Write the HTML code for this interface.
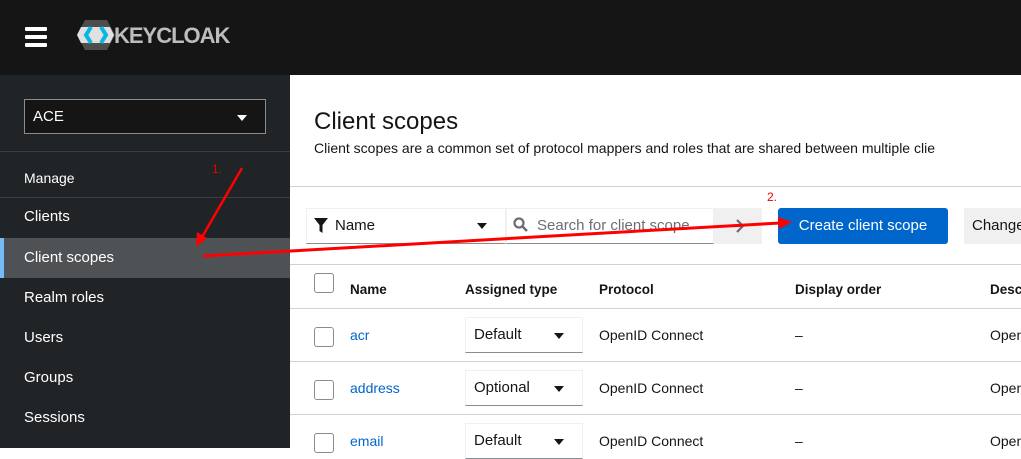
<!DOCTYPE html>
<html><head><style>
*{margin:0;padding:0;box-sizing:border-box}
body{width:1021px;height:448px;overflow:hidden;font-family:"Liberation Sans",sans-serif;background:#fff;position:relative;color:#151515}
.hdr{position:absolute;left:0;top:0;width:1021px;height:75px;background:#151515}
.side{position:absolute;left:0;top:75px;width:290px;height:373px;background:#212427}
.abs{position:absolute;white-space:nowrap}
.nav{position:absolute;left:0;width:290px;height:40px;color:#fff;font-size:15px;line-height:40px;padding-left:24px}
.hl{position:absolute;height:1px;background:#d2d2d2}
.th{position:absolute;font-size:13.5px;font-weight:bold;top:282px}
.td{position:absolute;font-size:14px}
.cb{position:absolute;left:314px;width:20px;height:20px;border:1px solid #8a8d90;border-radius:3px;background:#fff}
.sel{position:absolute;left:465px;width:118px;height:36px;border:1px solid #f0f0f0;border-bottom:1px solid #8a8d90;font-size:15px;padding:8px 0 0 8px}
.sel:after{content:"";position:absolute;right:18px;top:15px;border:5px solid transparent;border-top:6px solid #151515}
a{color:#06c}
</style></head><body>
<div class="hdr">
 <div class="abs" style="left:25px;top:27px;width:22px;height:4px;background:#fff;border-radius:1px"></div>
 <div class="abs" style="left:25px;top:35px;width:22px;height:4px;background:#fff;border-radius:1px"></div>
 <div class="abs" style="left:25px;top:43px;width:22px;height:4px;background:#fff;border-radius:1px"></div>
 <svg class="abs" style="left:76px;top:19px" width="40" height="32" viewBox="0 0 40 32"><polygon points="9,1 31,1 39,16 31,31 9,31 1,16" fill="#4d4d4d"/><polygon points="1,16 5,8 34,8 38,16 34,24 5,24" fill="#e0e0e0"/><path d="M15,8 L10,16 L15,24 M25,8 L30,16 L25,24" stroke="#00b8e3" stroke-width="4" fill="none"/></svg>
 <div class="abs" style="left:114px;top:23px;font-size:22px;font-weight:bold;color:#bdbdbd;letter-spacing:-1px">KEYCLOAK</div>
</div>
<div class="side">
 <div class="abs" style="left:24px;top:24px;width:242px;height:35px;border:1px solid #8a8d90;background:#151515;color:#fff;font-size:15px;padding:8px 0 0 8px">ACE</div>
 <div class="abs" style="left:237px;top:40px;border:5px solid transparent;border-top:6px solid #fff"></div>
 <div class="abs" style="left:0;top:76px;width:290px;height:1px;background:#3c3f42"></div>
 <div class="abs" style="left:0;top:122px;width:290px;height:1px;background:#3c3f42"></div>
</div>
<div class="nav" style="font-size:14px;top:158px">Manage</div>
<div class="nav" style="top:197px">Clients</div>
<div class="nav" style="top:238px;background:#4f5255;border-left:4px solid #73bcf7;padding-left:20px">Client scopes</div>
<div class="nav" style="top:278px">Realm roles</div>
<div class="nav" style="top:318px">Users</div>
<div class="nav" style="top:358px">Groups</div>
<div class="nav" style="top:398px">Sessions</div>

<div class="abs" style="left:314px;top:108px;font-size:24px">Client scopes</div>
<div class="abs" style="left:314px;top:140px;font-size:14px">Client scopes are a common set of protocol mappers and roles that are shared between multiple clie</div>
<div class="hl" style="left:290px;top:186px;width:731px"></div>
<div class="abs" style="left:306px;top:208px;width:200px;height:36px;border:1px solid #f0f0f0;border-bottom:1px solid #8a8d90;font-size:15px;padding:8px 0 0 28px">Name</div>
<svg class="abs" style="left:314px;top:218px" width="14" height="15" viewBox="0 0 14 15"><path d="M0,0H14L8.5,7V15L5.5,13V7Z" fill="#151515"/></svg>
<div class="abs" style="left:477px;top:223px;border:5px solid transparent;border-top:6px solid #151515"></div>
<div class="abs" style="left:506px;top:208px;width:208px;height:36px;border:1px solid #f0f0f0;border-bottom:1px solid #8a8d90;font-size:15px;padding:8px 0 0 30px;color:#6a6e73">Search for client scope</div>
<svg class="abs" style="left:513px;top:217px" width="15" height="15" viewBox="0 0 15 15"><circle cx="6" cy="6" r="4.5" stroke="#6a6e73" stroke-width="2.2" fill="none"/><path d="M9.5,9.5L14,14" stroke="#6a6e73" stroke-width="2.5"/></svg>
<div class="abs" style="left:714px;top:208px;width:48px;height:36px;background:#f0f0f0"></div>
<svg class="abs" style="left:729px;top:218px" width="16" height="16" viewBox="0 0 16 16"><path d="M1,8H14M8,2L14,8L8,14" stroke="#6a6e73" stroke-width="2.2" fill="none"/></svg>
<div class="abs" style="left:778px;top:208px;width:170px;height:36px;background:#06c;border-radius:3px;color:#fff;font-size:15px;text-align:center;line-height:36px">Create client scope</div>
<div class="abs" style="left:964px;top:208px;width:80px;height:36px;background:#f0f0f0;font-size:15px;line-height:36px;padding-left:8px">Change</div>
<div class="hl" style="left:290px;top:264px;width:731px"></div>
<div class="cb" style="top:273px"></div>
<div class="th" style="left:350px">Name</div>
<div class="th" style="left:465px">Assigned type</div>
<div class="th" style="left:599px">Protocol</div>
<div class="th" style="left:795px">Display order</div>
<div class="th" style="left:990px">Desc</div>
<div class="hl" style="left:290px;top:308px;width:731px"></div>
<div class="cb" style="top:327px"></div><div class="td" style="left:350px;top:327px"><a>acr</a></div>
<div class="sel" style="top:317px">Default</div>
<div class="td" style="left:599px;top:327px">OpenID Connect</div><div class="td" style="left:795px;top:327px">–</div><div class="td" style="left:990px;top:327px">Open</div>
<div class="hl" style="left:290px;top:361px;width:731px"></div>
<div class="cb" style="top:380px"></div><div class="td" style="left:350px;top:380px"><a>address</a></div>
<div class="sel" style="top:370px">Optional</div>
<div class="td" style="left:599px;top:380px">OpenID Connect</div><div class="td" style="left:795px;top:380px">–</div><div class="td" style="left:990px;top:380px">Open</div>
<div class="hl" style="left:290px;top:414px;width:731px"></div>
<div class="cb" style="top:433px"></div><div class="td" style="left:350px;top:433px"><a>email</a></div>
<div class="sel" style="top:423px">Default</div>
<div class="td" style="left:599px;top:433px">OpenID Connect</div><div class="td" style="left:795px;top:433px">–</div><div class="td" style="left:990px;top:433px">Open</div>

<div class="abs" style="left:212px;top:162px;color:#e00;font-size:12px">1.</div>
<div class="abs" style="left:767px;top:190px;color:#e00;font-size:12px">2.</div>
<svg class="abs" style="left:0;top:0" width="1021" height="448">
 <path d="M242,168L202,237" stroke="#f00" stroke-width="2.5" fill="none"/>
 <polygon points="196,247 197,232 207,238" fill="#f00"/>
 <path d="M203,256L780,223" stroke="#f00" stroke-width="3" fill="none"/>
 <polygon points="792,222 778,217 779,229" fill="#f00"/>
</svg>
</body></html>
